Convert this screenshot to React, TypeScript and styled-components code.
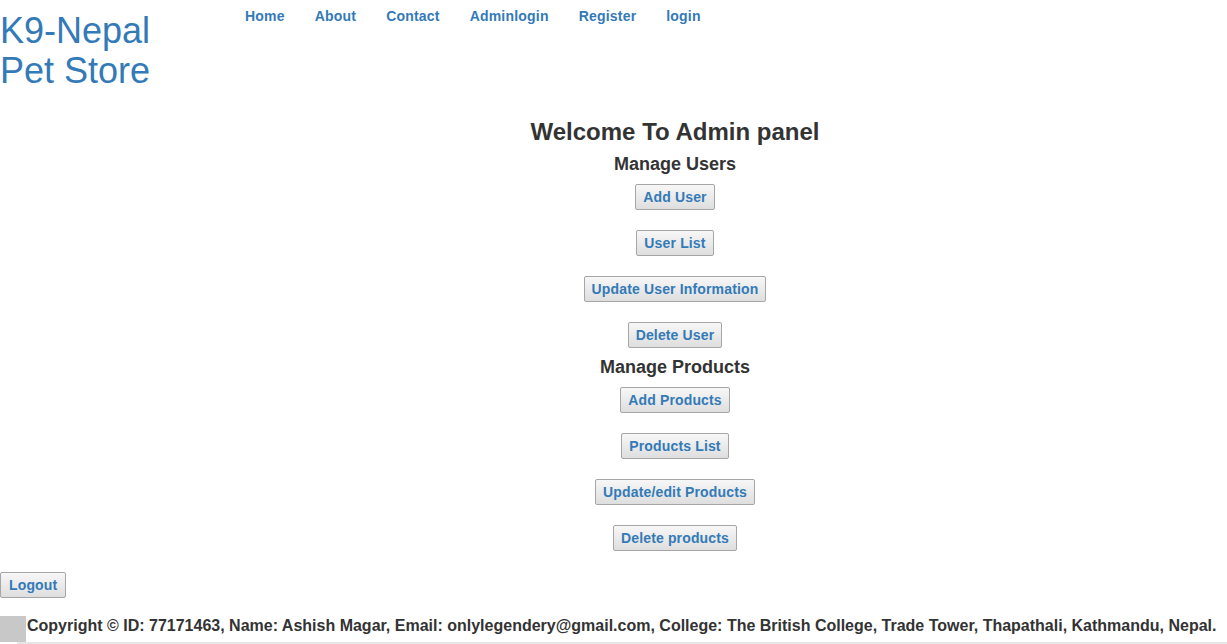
import React from "react";
import styled, { createGlobalStyle } from "styled-components";

const Global = createGlobalStyle`
  html, body { margin: 0; padding: 0; background: #fff; }
  body { font-family: "Liberation Sans", Arial, sans-serif; color: #333; font-size: 14px; }
`;

const Page = styled.div`
  width: 1227px;
  height: 644px;
  overflow: hidden;
  display: flex;
  flex-direction: column;
`;

const Header = styled.header`
  display: flex;
  align-items: flex-start;
`;

const Logo = styled.h1`
  width: 230px;
  margin: 0;
  padding-top: 11px;
  font-size: 36px;
  font-weight: normal;
  line-height: 39.6px;
  color: #337ab7;
`;

const Nav = styled.nav`
  display: flex;
  padding-top: 6px;
`;

const NavLink = styled.a`
  display: block;
  padding: 0 15px;
  line-height: 20px;
  font-size: 14px;
  font-weight: bold;
  letter-spacing: 0.2px;
  color: #337ab7;
  text-decoration: none;
`;

const Main = styled.main`
  margin-top: 29px;
  padding-left: 123px;
  display: flex;
  flex-direction: column;
  align-items: center;
`;

const Title = styled.h2`
  margin: 0;
  font-size: 24px;
  line-height: 26px;
  font-weight: bold;
  color: #333;
`;

const SectionTitle = styled.h3`
  margin: 9px 0 0;
  font-size: 18px;
  line-height: 20px;
  font-weight: bold;
  color: #333;
`;

const ButtonStack = styled.div`
  display: flex;
  flex-direction: column;
  align-items: center;
  gap: 20px;
  margin-top: 10px;
`;

const Button = styled.button<{ $padX?: number }>`
  font-family: "Liberation Sans", Arial, sans-serif;
  font-size: 14px;
  font-weight: bold;
  line-height: 16px;
  letter-spacing: 0.15px;
  color: #337ab7;
  padding: 4px ${(p) => p.$padX ?? 7}px;
  background: linear-gradient(#f7f7f7, #dedede);
  border: 1px solid #a6a6a6;
  border-radius: 2px;
  cursor: pointer;
`;

const LogoutRow = styled.div`
  margin-top: 21px;
  display: flex;
`;

const Footer = styled.footer`
  margin-top: 18px;
  display: flex;
  flex-direction: column;
`;

const FooterRow = styled.div`
  display: flex;
  align-items: flex-start;
`;

const FooterMark = styled.div`
  width: 26px;
  height: 26px;
  background: #c8c8c8;
  flex: none;
`;

const FooterText = styled.p`
  margin: 0 0 0 1px;
  font-size: 16px;
  font-weight: bold;
  line-height: 20px;
  color: #333;
  white-space: nowrap;
`;

const FooterRule = styled.div`
  margin-left: 17px;
  height: 3px;
  background: #e6e6e6;
`;

const navItems = ["Home", "About", "Contact", "Adminlogin", "Register", "login"];
const userActions = ["Add User", "User List", "Update User Information", "Delete User"];
const productActions = ["Add Products", "Products List", "Update/edit Products", "Delete products"];

export default function App() {
  return (
    <Page>
      <Global />
      <Header>
        <Logo>
          K9-Nepal
          <br />
          Pet Store
        </Logo>
        <Nav>
          {navItems.map((n) => (
            <NavLink key={n} href="#">
              {n}
            </NavLink>
          ))}
        </Nav>
      </Header>
      <Main>
        <Title>Welcome To Admin panel</Title>
        <SectionTitle>Manage Users</SectionTitle>
        <ButtonStack>
          {userActions.map((a) => (
            <Button key={a}>{a}</Button>
          ))}
        </ButtonStack>
        <SectionTitle>Manage Products</SectionTitle>
        <ButtonStack>
          {productActions.map((a) => (
            <Button key={a}>{a}</Button>
          ))}
        </ButtonStack>
      </Main>
      <LogoutRow>
        <Button $padX={8}>Logout</Button>
      </LogoutRow>
      <Footer>
        <FooterRow>
          <FooterMark />
          <FooterText>
            Copyright © ID: 77171463, Name: Ashish Magar, Email: onlylegendery@gmail.com, College: The British College, Trade Tower, Thapathali, Kathmandu, Nepal.
          </FooterText>
        </FooterRow>
        <FooterRule />
      </Footer>
    </Page>
  );
}
